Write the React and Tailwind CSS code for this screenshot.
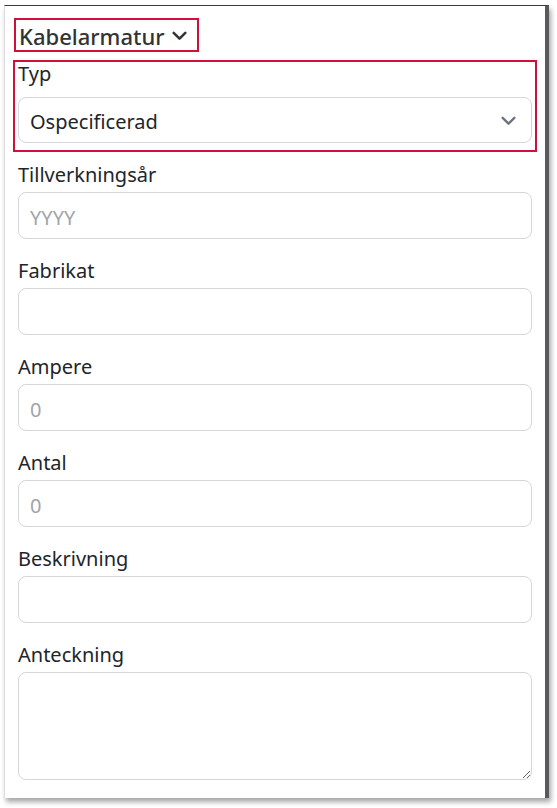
import React from "react";

const font = { fontFamily: '"Noto Sans", "Open Sans", Arial, sans-serif' };

function Chevron({ className, stroke = "currentColor", width = 2 }) {
  return (
    <svg viewBox="0 0 16 16" className={className} fill="none" stroke={stroke} strokeWidth={width} strokeLinecap="round" strokeLinejoin="round">
      <path d="M2.5 5.5 L8 11 L13.5 5.5" />
    </svg>
  );
}

function Field({ label, placeholder, textarea }) {
  return (
    <div className="flex flex-col">
      <label className="block h-[30px] pt-[3px] text-[20px] leading-[27px] text-[#212529] mb-[4px]">{label}</label>
      {textarea ? (
        <textarea className="block w-full h-[108px] rounded-[8px] border border-[#d4d6dc] bg-white px-[12px] py-[8px] text-[20px] text-[#212529] outline-none" />
      ) : (
        <input
          placeholder={placeholder}
          className="block w-full h-[47px] rounded-[8px] border border-[#d4d6dc] bg-white px-[11px] pt-[3px] text-[20px] text-[#212529] placeholder:text-[#a0a4ab] outline-none"
        />
      )}
    </div>
  );
}

export default function App() {
  return (
    <div className="w-[557px] h-[808px] bg-white" style={font}>
      <div className="ml-[4px] mt-[5px] w-[545px] h-[793px] bg-white border-t border-t-[#3a3a3a] border-l border-l-[#dcdcdc] border-r-[4px] border-r-[#58585d] shadow-[2px_4px_5px_rgba(0,0,0,0.35)]">
        <div className="pt-[12px] px-[9px]">
          <div className="inline-flex items-center h-[34px] border-2 border-[#d0103a] pl-[3px] pr-[9px] gap-[6px]">
            <span className="text-[22px] leading-[30px] pt-[2px] font-medium text-[#333]">Kabelarmatur</span>
            <Chevron className="w-[17px] h-[17px] text-[#333]" width={2.4} />
          </div>
        </div>
        <div className="px-[8px] mt-[8px] pr-[8px]">
          <div className="border-2 border-[#d0103a] px-[3px] pb-[7px]">
            <div className="h-[30px] text-[20px] leading-[24px] text-[#212529] mb-[5px]">Typ</div>
            <div className="flex items-center justify-between h-[46px] rounded-[8px] border border-[#d4d6dc] bg-white pl-[11px] pr-[14px]">
              <span className="text-[20px] pt-[4px] text-[#212529]">Ospecificerad</span>
              <Chevron className="w-[17px] h-[17px]" stroke="#6b7280" width={2.2} />
            </div>
          </div>
        </div>
        <div className="px-[13px] pr-[13px] mt-[6px] flex flex-col gap-[15px]">
          <Field label="Tillverkningsår" placeholder="YYYY" />
          <Field label="Fabrikat" placeholder="" />
          <Field label="Ampere" placeholder="0" />
          <Field label="Antal" placeholder="0" />
          <Field label="Beskrivning" placeholder="" />
          <Field label="Anteckning" textarea />
        </div>
      </div>
    </div>
  );
}
